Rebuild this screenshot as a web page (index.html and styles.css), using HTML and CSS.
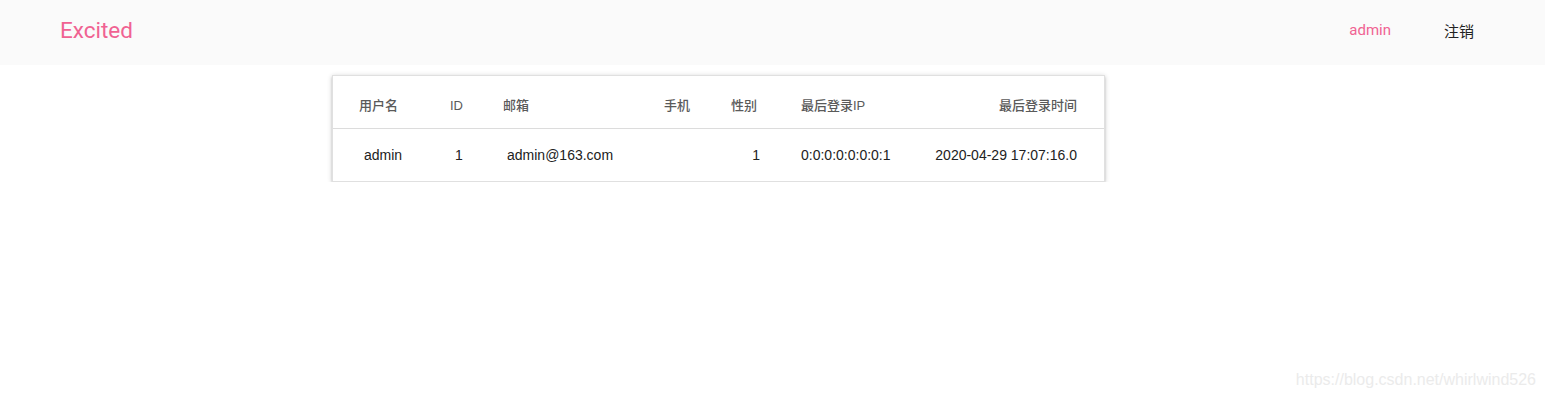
FILE: index.html
```html
<!doctype html>
<html lang="en">

<head>
    <meta charset="utf-8">
    <title>Excited - 用户列表</title>
    <link rel="stylesheet" href="styles.css">
</head>

<body>
    <nav class="navbar">
        <a class="brand" href="#">Excited</a>
        <ul class="nav-links">
            <li><a class="nav-user" href="#">admin</a></li>
            <li><a class="nav-logout" href="#">注销</a></li>
        </ul>
    </nav>

    <main class="content">
        <div class="card">
            <div class="row head">
                <div class="cell c1">用户名</div>
                <div class="cell c2">ID</div>
                <div class="cell c3">邮箱</div>
                <div class="cell c4">手机</div>
                <div class="cell c5">性别</div>
                <div class="cell c6">最后登录IP</div>
                <div class="cell c7">最后登录时间</div>
            </div>
            <div class="row body">
                <div class="cell c1">admin</div>
                <div class="cell c2">1</div>
                <div class="cell c3">admin@163.com</div>
                <div class="cell c4"></div>
                <div class="cell c5">1</div>
                <div class="cell c6">0:0:0:0:0:0:0:1</div>
                <div class="cell c7">2020-04-29 17:07:16.0</div>
            </div>
        </div>
    </main>

    <div class="watermark">https://blog.csdn.net/whirlwind526</div>
</body>

</html>
```

FILE: styles.css
```css
/* base */
body {
    margin: 0;
    background: #fff;
    font-family: "Liberation Sans", Arial, "Noto Sans CJK SC", sans-serif;
    color: #222;
}

a {
    text-decoration: none;
}

/* top bar */
.navbar {
    height: 65px;
    background: #fafafa;
    display: flex;
    align-items: center;
    justify-content: space-between;
    padding: 0 71px 0 60px;
}

.brand {
    font-family: Roboto, "Noto Sans CJK SC", sans-serif;
    font-size: 22.5px;
    color: #f06292;
    margin-top: -5px;
}

.nav-links {
    list-style: none;
    margin: 0;
    padding: 0;
    display: flex;
    align-items: center;
    gap: 53px;
    margin-top: -5px;
}

.nav-links a {
    font-family: Roboto, "Noto Sans CJK SC", sans-serif;
    font-size: 15px;
}

.nav-user {
    color: #f06292;
}

.nav-logout {
    color: #222;
}

/* table card */
.content {
    display: flex;
    justify-content: center;
    padding-top: 10px;
    padding-right: 108px;
}

.card {
    width: 771px;
    border: 1px solid #e0e0e0;
    background: #fff;
    box-shadow: 0 2px 2px 0 rgba(0, 0, 0, 0.14), 0 3px 1px -2px rgba(0, 0, 0, 0.12), 0 1px 5px 0 rgba(0, 0, 0, 0.2);
}

.row {
    display: grid;
    grid-template-columns: 91px 53px 137px 60px 101px 132px 144px;
    padding: 0 27px 0 26px;
    line-height: 18px;
}

.row.head {
    padding-top: 21px;
    padding-bottom: 13px;
    border-bottom: 1px solid #dcdcdc;
    font-size: 13px;
    color: #5a5a5a;
    font-weight: 500;
}

.row.body {
    padding-top: 17px;
    padding-bottom: 17px;
    font-size: 14px;
    color: #222;
}

.c4,
.c5,
.c7 {
    text-align: right;
}

.head .c4 {
    padding-right: 10px;
}

.head .c5 {
    padding-right: 44px;
}

.body .c5 {
    padding-right: 41px;
}

.body .c1,
.body .c2 {
    padding-left: 5px;
}

.body .c3 {
    padding-left: 4px;
}

/* blog watermark */
.watermark {
    position: absolute;
    right: 9px;
    bottom: 8px;
    font-size: 16px;
    color: #ebebeb;
}
```
